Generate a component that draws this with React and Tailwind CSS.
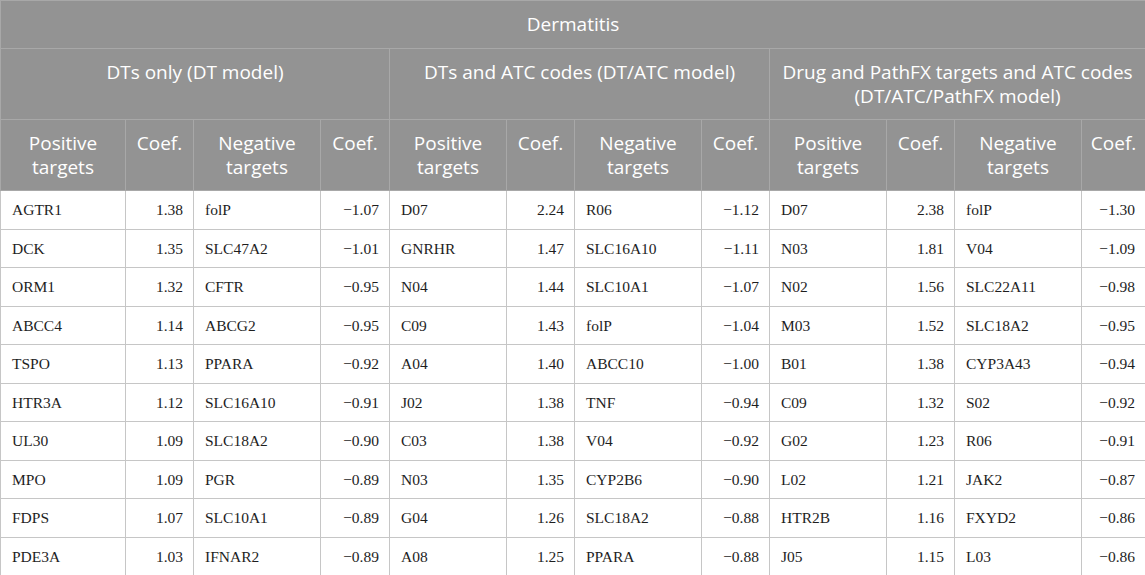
import React from 'react';

const widths = [125, 68, 127, 69, 117, 68, 127, 68, 117, 68, 127, 64];

const rows = [
    ['AGTR1', '1.38', 'folP', '−1.07', 'D07', '2.24', 'R06', '−1.12', 'D07', '2.38', 'folP', '−1.30'],
    ['DCK', '1.35', 'SLC47A2', '−1.01', 'GNRHR', '1.47', 'SLC16A10', '−1.11', 'N03', '1.81', 'V04', '−1.09'],
    ['ORM1', '1.32', 'CFTR', '−0.95', 'N04', '1.44', 'SLC10A1', '−1.07', 'N02', '1.56', 'SLC22A11', '−0.98'],
    ['ABCC4', '1.14', 'ABCG2', '−0.95', 'C09', '1.43', 'folP', '−1.04', 'M03', '1.52', 'SLC18A2', '−0.95'],
    ['TSPO', '1.13', 'PPARA', '−0.92', 'A04', '1.40', 'ABCC10', '−1.00', 'B01', '1.38', 'CYP3A43', '−0.94'],
    ['HTR3A', '1.12', 'SLC16A10', '−0.91', 'J02', '1.38', 'TNF', '−0.94', 'C09', '1.32', 'S02', '−0.92'],
    ['UL30', '1.09', 'SLC18A2', '−0.90', 'C03', '1.38', 'V04', '−0.92', 'G02', '1.23', 'R06', '−0.91'],
    ['MPO', '1.09', 'PGR', '−0.89', 'N03', '1.35', 'CYP2B6', '−0.90', 'L02', '1.21', 'JAK2', '−0.87'],
    ['FDPS', '1.07', 'SLC10A1', '−0.89', 'G04', '1.26', 'SLC18A2', '−0.88', 'HTR2B', '1.16', 'FXYD2', '−0.86'],
    ['PDE3A', '1.03', 'IFNAR2', '−0.89', 'A08', '1.25', 'PPARA', '−0.88', 'J05', '1.15', 'L03', '−0.86'],
];

const th = 'border border-[#a8a8a8] align-top text-center font-normal px-1 pt-[11px] pb-[8px]';

const ColHeads = () => (
    <>
        <th className={th}>Positive<br />targets</th>
        <th className={th}>Coef.</th>
        <th className={th}>Negative<br />targets</th>
        <th className={th}>Coef.</th>
    </>
);

export default function App() {
    return (
        <div className="w-[1145px] h-[575px] overflow-hidden bg-white">
            <table className="w-[1145px] table-fixed border-collapse">
                <colgroup>
                    {widths.map((w, i) => (
                        <col key={i} style={{ width: w }} />
                    ))}
                </colgroup>
                <thead className="bg-[#939393] text-white text-[19px] leading-[24px] font-['Open_Sans',sans-serif]">
                    <tr className="h-[48px]">
                        <th colSpan={12} className={th}>Dermatitis</th>
                    </tr>
                    <tr className="h-[71px]">
                        <th colSpan={4} className={th}>DTs only (DT model)</th>
                        <th colSpan={4} className={th}>DTs and ATC codes (DT/ATC model)</th>
                        <th colSpan={4} className={th + ' whitespace-nowrap'}>
                            Drug and PathFX targets and ATC codes<br />(DT/ATC/PathFX model)
                        </th>
                    </tr>
                    <tr className="h-[71px]">
                        <ColHeads />
                        <ColHeads />
                        <ColHeads />
                    </tr>
                </thead>
                <tbody className="text-[#1e1e1e] text-[15.5px] font-['Liberation_Serif',serif]">
                    {rows.map((r, ri) => (
                        <tr key={ri} className="h-[38.5px]">
                            {r.map((c, ci) => (
                                <td
                                    key={ci}
                                    className={
                                        'border border-[#c6c6c6] align-middle px-[11px] ' +
                                        (ci % 2 === 1 ? 'text-right pr-[10px]' : 'text-left')
                                    }
                                >
                                    {c}
                                </td>
                            ))}
                        </tr>
                    ))}
                </tbody>
            </table>
        </div>
    );
}
